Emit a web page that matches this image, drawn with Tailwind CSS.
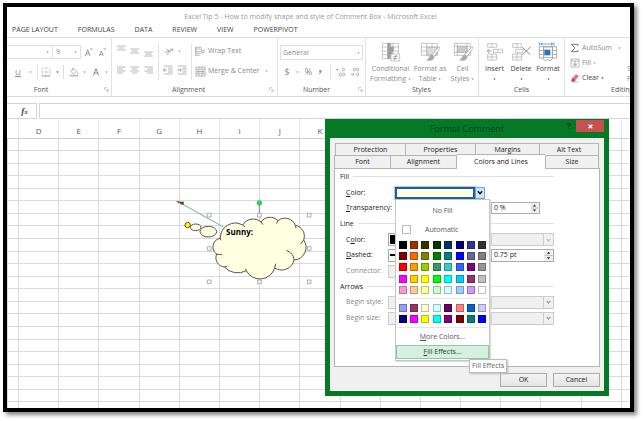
<!DOCTYPE html>
<html lang="en">
<head>
<meta charset="utf-8">
<title>Excel Tip 5</title>
<script src="https://cdn.jsdelivr.net/npm/@tailwindcss/browser@4"></script>
</head>
<body class="bg-white font-['Open_Sans','Noto_Sans',sans-serif] text-[7px] leading-[10px] text-[#444]">
<svg class="hidden">
  <symbol id="caret" viewBox="0 0 10 6"><path d="M1 1h8L5 6z" fill="currentColor"/></symbol>
  <symbol id="launch" viewBox="0 0 16 16"><path d="M2 10V2h8M6 6l7 7M14 7v7H7" fill="none" stroke="#aaa" stroke-width="2"/></symbol>
  <symbol id="chev" viewBox="0 0 14 10"><path d="M2 2l5 6 5-6" fill="none" stroke="currentColor" stroke-width="3"/></symbol>
  <symbol id="spin" viewBox="0 0 24 32"><path d="M7 11l5-6 5 6zM7 21l5 6 5-6z" fill="#222"/><path d="M1 16h22" stroke="#aaa" stroke-width="2"/></symbol>
</svg>
<div class="h-screen p-[3px] pr-[9px] pb-[9px]">
<div class="relative flex h-full flex-col overflow-hidden border-4 border-black bg-white shadow-[3px_3px_4px_#888]">

  <header class="flex h-[15px] shrink-0 items-end justify-center text-[#999]">
    <h1 class="pr-[16px]">Excel Tip 5 - How to modify shape and style of Comment Box - Microsoft Excel</h1>
  </header>
  <nav class="flex h-[16px] shrink-0 items-center gap-[20px] border-b border-[#dcdcdc] pl-[5px]">
    <button>PAGE LAYOUT</button><button>FORMULAS</button><button>DATA</button><button>REVIEW</button><button>VIEW</button><button>POWERPIVOT</button>
  </nav>

  <section class="flex h-[59px] shrink-0 overflow-hidden border-b border-[#dcdcdc] text-[#8a8a8a]">
    <!-- Font -->
    <div class="flex w-[105px] shrink-0 flex-col border-r border-[#e2e2e2]">
      <div class="flex h-[14px] mt-[7px] items-center">
        <button aria-label="Font name" class="flex h-[14px] w-[46px] items-center justify-end border border-l-0 border-[#e0e0e0] pr-[3px]"><svg class="h-[2px] w-[3px]"><use href="#caret"/></svg></button>
        <button aria-label="Font size" class="flex h-[14px] w-[28px] items-center justify-between border border-l-0 border-[#e0e0e0] px-[3px]">9<svg class="h-[2px] w-[3px]"><use href="#caret"/></svg></button>
        <button aria-label="Increase font size" class="ml-[3px] w-[12px]"><svg class="h-[10px] w-[10px]" viewBox="0 0 30 30" fill="none" stroke="#8a8a8a" stroke-width="2.5"><path d="M4 27L11 8l7 19M7 20h9"/><path d="M19 8l3-4 3 4"/></svg></button>
        <button aria-label="Decrease font size" class="ml-[2px] w-[12px]"><svg class="h-[10px] w-[10px]" viewBox="0 0 30 30" fill="none" stroke="#8a8a8a" stroke-width="2.5"><path d="M4 27L10 12l6 15M6 22h8"/><path d="M18 4l3 4 3-4"/></svg></button>
      </div>
      <div class="mt-[6px] flex h-[14px] items-center">
        <button class="w-[22px] text-center text-[8px] underline">U</button>
        <svg class="mr-[5px] h-[2px] w-[3px] shrink-0"><use href="#caret"/></svg>
        <i class="h-[14px] w-px bg-[#ddd]"></i>
        <button aria-label="Borders" class="ml-[3px]"><svg class="h-[10px] w-[10px]" viewBox="0 0 30 30" fill="none" stroke="#aaa" stroke-width="2"><path d="M3 3h24v24H3zM15 3v24M3 15h24" stroke-dasharray="3 2"/><path d="M3 27h24" stroke="#888"/></svg></button>
        <svg class="ml-[5px] mr-[4px] h-[2px] w-[3px] shrink-0 text-[#444]"><use href="#caret"/></svg>
        <i class="h-[14px] w-px bg-[#ddd]"></i>
        <button aria-label="Fill color" class="ml-[5px]"><svg class="h-[10px] w-[10px]" viewBox="0 0 30 30" fill="none" stroke="#999" stroke-width="2"><path d="M5 13L14 4l9 9-9 8zM12 2v9M24 14c4 4 3 6 1 7"/><path d="M2 26h26" stroke-width="5" stroke="#bbb"/></svg></button>
        <svg class="ml-[4px] h-[2px] w-[3px] shrink-0"><use href="#caret"/></svg>
        <button aria-label="Font color" class="ml-[5px]"><svg class="h-[10px] w-[10px]" viewBox="0 0 30 30" fill="none" stroke="#888" stroke-width="3"><path d="M7 25l8-20 8 20M10 18h10"/></svg></button>
        <svg class="ml-[4px] h-[2px] w-[3px] shrink-0"><use href="#caret"/></svg>
      </div>
      <div class="mt-auto flex h-[12px] items-center pb-px"><span class="w-[68px] text-center text-[#555]">Font</span><svg class="ml-auto mr-[2px] h-[5px] w-[5px]"><use href="#launch"/></svg></div>
    </div>
    <!-- Alignment -->
    <div class="flex w-[166px] shrink-0 flex-col border-r border-[#e2e2e2]">
      <div class="flex flex-1 pt-[6px]">
        <div class="flex w-[46px] flex-col gap-[6px] pl-[4px]">
          <svg class="h-[14px] w-[40px]" viewBox="0 0 120 42" stroke="#999" stroke-width="2"><path d="M3 6h26M7 12h18M3 18h26M43 15h26M47 21h18M43 27h26M85 24h26M89 30h18M85 36h26"/></svg>
          <svg class="h-[14px] w-[40px]" viewBox="0 0 120 42" stroke="#999" stroke-width="2"><path d="M3 9h26M3 15h18M3 21h26M3 27h18M43 9h26M48 15h16M43 21h26M48 27h16M85 9h26M93 15h18M85 21h26M93 27h18"/></svg>
        </div>
        <i class="h-[36px] w-px bg-[#e2e2e2]"></i>
        <div class="flex w-[32px] flex-col gap-[6px] pl-[4px]">
          <div class="flex h-[14px] items-center gap-[4px]">
            <svg class="h-[11px] w-[11px]" viewBox="0 0 33 33" fill="none" stroke="#888" stroke-width="2"><path d="M10 28L29 9M22 9h7v7M6 17a4 4 0 1 0 5-5M12 8l7 8M15 16a3 3 0 1 0 4-5"/></svg>
            <svg class="h-[2px] w-[3px]"><use href="#caret"/></svg>
          </div>
          <svg class="h-[12px] w-[26px]" viewBox="0 0 78 36" fill="none" stroke="#999" stroke-width="2"><path d="M3 6h26M15 12h14M15 18h14M15 24h14M3 30h26M45 6h26M58 12h13M58 18h13M58 24h13M45 30h26"/><path d="M12 18H2M6 13l-5 5 5 5M43 18h11M50 13l5 5-5 5" stroke="#777"/></svg>
        </div>
        <i class="h-[36px] w-px bg-[#e2e2e2]"></i>
        <div class="flex flex-1 flex-col gap-[6px] pl-[3px]">
          <button class="flex h-[14px] items-center gap-[3px]"><svg class="h-[11px] w-[10px]" viewBox="0 0 30 33" fill="none" stroke="#999" stroke-width="2"><path d="M2 2v29M2 4h18M2 9h18v8H2zM2 22h16M2 28h12M20 13h7v7h-6M24 17l-3 3 3 3"/></svg>Wrap Text</button>
          <button class="flex h-[14px] items-center gap-[2px] whitespace-nowrap"><svg class="h-[11px] w-[11px] shrink-0" viewBox="0 0 33 33" fill="none" stroke="#999" stroke-width="2"><path d="M3 3h27v27H3zM3 10h27M3 23h27M12 3v7M21 3v7M12 23v7M21 23v7"/><path d="M7 17h19M11 13l-4 4 4 4M22 13l4 4-4 4" stroke="#777"/></svg>Merge &amp; Center<svg class="ml-[4px] h-[2px] w-[3px] shrink-0"><use href="#caret"/></svg></button>
        </div>
      </div>
      <div class="flex h-[12px] items-center pb-px"><span class="ml-[60px] text-[#555]">Alignment</span><svg class="ml-auto mr-[3px] h-[5px] w-[5px]"><use href="#launch"/></svg></div>
    </div>
    <!-- Number -->
    <div class="flex w-[88px] shrink-0 flex-col border-r border-[#e2e2e2]">
      <button class="mx-[2px] mt-[7px] flex h-[15px] items-center justify-between border border-[#ddd] px-[2px]">General<svg class="h-[2px] w-[3px]"><use href="#caret"/></svg></button>
      <div class="mt-[5px] flex h-[14px] items-center text-[9px]">
        <button class="w-[18px] text-center">$</button><svg class="h-[2px] w-[3px]"><use href="#caret"/></svg>
        <button class="w-[19px] text-center">%</button><button aria-label="Comma style" class="w-[8px]"><svg class="h-[6px] w-[5px]" viewBox="0 0 15 18"><path d="M4 3h6v6L6 15H3l3-6H4z" fill="#888"/></svg></button>
        <i class="ml-[4px] h-[14px] w-px bg-[#ddd]"></i>
        <button aria-label="Increase decimal" class="ml-[5px] w-[14px]"><svg class="h-[10px] w-[10px]" viewBox="0 0 30 30" fill="none" stroke="#999" stroke-width="2"><path d="M10 8H1M5 4L1 8l4 4M14 12v1"/><rect x="19" y="3" width="6" height="9" rx="3"/><path d="M5 26v1"/><rect x="10" y="18" width="6" height="9" rx="3"/><rect x="20" y="18" width="6" height="9" rx="3"/></svg></button>
        <button aria-label="Decrease decimal" class="w-[12px]"><svg class="h-[10px] w-[10px]" viewBox="0 0 30 30" fill="none" stroke="#999" stroke-width="2"><rect x="10" y="3" width="6" height="9" rx="3"/><rect x="20" y="3" width="6" height="9" rx="3"/><path d="M5 11v1M2 22h10M8 18l4 4-4 4M15 26v1"/><rect x="20" y="18" width="6" height="9" rx="3"/></svg></button>
      </div>
      <div class="mt-auto flex h-[12px] items-center pb-px"><span class="ml-[25px] text-[#555]">Number</span><svg class="ml-auto mr-[2px] h-[5px] w-[5px]"><use href="#launch"/></svg></div>
    </div>
    <!-- Styles -->
    <div class="flex w-[113px] shrink-0 flex-col border-r border-[#e2e2e2]">
      <div class="flex flex-1 pt-[4px] leading-[10px]">
        <button class="flex w-[47px] flex-col items-center whitespace-nowrap pl-[2px]"><svg class="mb-[2px] h-[20px] w-[20px]" viewBox="0 0 60 60" fill="none" stroke="#aaa" stroke-width="2"><path d="M4 4h48v46H4zM4 15h48M4 27h48M4 38h48M20 4v46M36 4v46"/><path d="M20 4h9v11h-9zM20 27h14v11H20zM20 15h18v12H20zM20 38h8v12h-8z" fill="#999"/><path d="M30 36h26v21H30z" fill="#fff"/><path d="M36 43h13M36 50h13M46 39l-7 15" stroke="#888"/></svg>Conditional<span class="flex items-center gap-[2px]">Formatting<svg class="h-[2px] w-[3px]"><use href="#caret"/></svg></span></button>
        <button class="flex w-[34px] flex-col items-center whitespace-nowrap"><svg class="mb-[2px] h-[20px] w-[20px]" viewBox="0 0 60 60" fill="none" stroke="#aaa" stroke-width="2"><path d="M4 4h48v36H4zM4 15h48M4 27h48M20 4v36M36 4v36"/><path d="M20 16h31v23H20z" fill="#ddd"/><path d="M57 14L36 38l6 6 18-25z" fill="#fff" stroke="#999"/><path d="M36 38c-9 2-7 12-16 16 10 3 22 1 22-10z" fill="#aaa"/></svg>Format as<span class="flex items-center gap-[2px]">Table<svg class="h-[2px] w-[3px]"><use href="#caret"/></svg></span></button>
        <button class="flex w-[31px] flex-col items-center whitespace-nowrap"><svg class="mb-[2px] h-[20px] w-[20px]" viewBox="0 0 60 60" fill="none" stroke="#aaa" stroke-width="2"><path d="M4 4h48v36H4zM4 13h48M4 31h48M13 4v36M42 4v36"/><path d="M13 13h29v18H13z" fill="#ccc"/><path d="M57 14L36 38l6 6 18-25z" fill="#fff" stroke="#999"/><path d="M36 38c-9 2-7 12-16 16 10 3 22 1 22-10z" fill="#aaa"/></svg>Cell<span class="flex items-center gap-[2px]">Styles<svg class="h-[2px] w-[3px]"><use href="#caret"/></svg></span></button>
      </div>
      <div class="flex h-[12px] items-center pb-px"><span class="ml-[46px] text-[#555]">Styles</span></div>
    </div>
    <!-- Cells -->
    <div class="flex w-[86px] shrink-0 flex-col border-r border-[#e2e2e2] text-[#444]">
      <div class="flex flex-1 pt-[4px] pl-[3px]">
        <button class="flex w-[25px] flex-col items-center"><svg class="mb-[2px] h-[20px] w-[18px]" viewBox="0 0 54 60" fill="none" stroke="#aaa" stroke-width="2"><path d="M5 5h27v11H5zM18 5v11M22 22h28v10H22zM36 22v10M5 36h27v18H5zM18 36v18M5 45h27"/><path d="M17 27H4M10 21l-6 6 6 6" stroke="#777"/></svg>Insert<svg class="mt-[4px] h-[2px] w-[3px]"><use href="#caret"/></svg></button>
        <button class="flex w-[28px] flex-col items-center"><svg class="mb-[2px] h-[20px] w-[20px]" viewBox="0 0 60 60" fill="none" stroke="#aaa" stroke-width="2"><path d="M5 5h27v11H5zM18 5v11M14 22h22v10H14zM5 36h27v18H5zM18 36v18M5 45h27"/><path d="M34 16l24 22M58 15L34 39" stroke="#888" stroke-width="3"/></svg>Delete<svg class="mt-[4px] h-[2px] w-[3px]"><use href="#caret"/></svg></button>
        <button class="flex w-[26px] flex-col items-center"><svg class="mb-[2px] h-[20px] w-[20px]" viewBox="0 0 60 60" fill="none" stroke="#888" stroke-width="2"><path d="M4 14h52v34H4zM4 25h52M4 37h52M17 14v34M43 14v34"/><path d="M17 15h26v32H17z" fill="#fff"/><path d="M19 23h18v17H19z" fill="#2f72b8" stroke="none"/><path d="M8 6h36M13 2L8 6l5 4M39 2l5 4-5 4M4 1v10M48 1v10" stroke="#2f72b8"/><path d="M14 48c4 9 10 9 14 3 4 6 12 6 16-3" fill="#fff"/></svg>Format<svg class="mt-[4px] h-[2px] w-[3px]"><use href="#caret"/></svg></button>
      </div>
      <div class="flex h-[12px] items-center justify-center pb-px text-[#555]">Cells</div>
    </div>
    <!-- Editing -->
    <div class="flex w-[96px] shrink-0 flex-col">
      <div class="flex flex-1">
        <div class="flex w-[62px] flex-col gap-[4px] pt-[4px] pl-[5px]">
          <button class="flex h-[11px] items-center gap-[2px]"><svg class="h-[10px] w-[10px]" viewBox="0 0 30 30" fill="none" stroke="#777" stroke-width="3"><path d="M24 9V4H4l11 11L4 26h20v-5"/></svg>AutoSum<svg class="ml-[4px] h-[2px] w-[3px]"><use href="#caret"/></svg></button>
          <button class="flex h-[11px] items-center gap-[2px]"><svg class="h-[10px] w-[10px]" viewBox="0 0 30 30" fill="none" stroke="#999" stroke-width="2"><path d="M3 3h24v24H3zM3 9h24"/><path d="M15 10v13M9 17l6 6 6-6" stroke-width="3"/></svg>Fill<svg class="h-[2px] w-[3px]"><use href="#caret"/></svg></button>
          <button class="flex h-[11px] items-center gap-[2px] text-[#444]"><svg class="h-[10px] w-[10px]" viewBox="0 0 30 30"><path d="M8 14L18 3l9 6-10 12z" fill="#e27a8c"/><path d="M8 14l9 7-4 5H7l-4-4z" fill="#c8405a"/><path d="M5 27h20" stroke="#999" stroke-width="2"/></svg>Clear<svg class="h-[2px] w-[3px]"><use href="#caret"/></svg></button>
        </div>
        <div class="pt-[26px]">Sort &amp;<br>Filter</div>
      </div>
      <div class="flex h-[12px] items-center pb-px pl-[46px] text-[#555]">Editing</div>
    </div>
  </section>

  <div class="mt-[6px] flex h-[16px] shrink-0 gap-[2px]">
    <button aria-label="Insert function" class="w-[30px] border border-l-0 border-[#d4d4d4] pl-[6px] font-['Liberation_Serif',serif] text-[9px] font-bold italic">f<span class="text-[7px]">x</span></button>
    <input aria-label="Formula bar" class="min-w-0 flex-1 border border-r-0 border-[#d4d4d4]">
  </div>

  <div class="min-h-0 flex-1 overflow-hidden">
    <table class="h-[296px] w-[655px] table-fixed border-collapse text-[8px]">
      <thead><tr id="cols" class="h-[19px]"><th class="w-[11px] border-r border-b border-r-[#e6e6e6] border-b-[#cfcfcf]"></th></tr></thead>
      <tbody id="rows"></tbody>
    </table>
  </div>

  <!-- Comment shape -->
  <figure class="absolute top-[178px] left-[153px] h-[110px] w-[170px]">
    <svg class="h-full w-full" viewBox="0 0 510 330" fill="none" stroke="#55554a" stroke-width="3">
      <path d="M62 54L190 126" stroke="#7ba9a0"/>
      <path d="M48 49h12l-3 7z" fill="#d22" stroke="none"/><path d="M58 50h14l-2 10-8-2z" fill="#265c33" stroke="none"/>
      <path d="M298 58v28" stroke="#888"/>
      <circle cx="298" cy="54" r="8" fill="#35cf52" stroke="none"/>
      <ellipse cx="107" cy="127" rx="16" ry="10" fill="#ffffe1"/>
      <ellipse cx="145" cy="140" rx="25" ry="16" fill="#ffffe1"/>
      <circle cx="83" cy="120" r="8" fill="#ff0" stroke="#554"/>
      <path d="M181 160A45 45 0 0 1 248 120A36 36 0 0 1 303 111A33 33 0 0 1 354 107A33 33 0 0 1 406 121A33 33 0 0 1 431 165A38 38 0 0 1 402 225A38 38 0 0 1 344 249A46 46 0 0 1 259 257A54 54 0 0 1 193 246A28 28 0 0 1 170 207A26 26 0 0 1 181 160Z" fill="#ffffe1"/>
      <path d="M248 120l7 6M303 111l6 8M354 107l-5 9M406 121l2 8M431 165l-9 12M402 225c0-13-9-23-23-29M344 249l3-13M259 257l-2-6M193 246l8-2M170 207q8 3 16 1M181 160l2 6"/>
      <g fill="#fff" stroke="#888" stroke-width="2"><path d="M142 85h11v11h-11zM293 85h11v11h-11zM442 85h11v11h-11zM142 185h11v11h-11zM442 185h11v11h-11zM142 285h11v11h-11zM293 285h11v11h-11zM442 285h11v11h-11z"/></g>
    </svg>
    <figcaption class="absolute top-[42px] left-[66px] text-[8px] font-bold text-black">Sunny:</figcaption>
  </figure>

  <!-- Format Comment dialog -->
  <div role="dialog" aria-labelledby="dlg" class="absolute top-[112px] left-[318px] flex h-[277px] w-[284px] flex-col border-[5px] border-t-0 border-[#047a26] bg-[#f0f0f0] text-[#222]">
    <div class="relative flex h-[19px] shrink-0 items-center justify-center bg-[#047a26] text-[9px] text-[#0b4018]">
      <h2 id="dlg">Format Comment</h2>
      <button class="absolute top-[2px] right-[33px] font-bold">?</button>
      <button aria-label="Close" class="absolute top-[1px] right-0 flex h-[12px] w-[28px] items-center justify-center bg-[#c75050]"><svg class="h-[5px] w-[5px]" viewBox="0 0 15 15"><path d="M2 2l11 11M13 2L2 13" stroke="#fff" stroke-width="4"/></svg></button>
    </div>
    <div role="tablist" class="mt-[5px] ml-[5px] mr-[5px] flex h-[12px] shrink-0 border-l border-t border-[#b4b4b4]">
      <button role="tab" class="w-[70px] border-r border-[#b4b4b4]">Protection</button><button role="tab" class="w-[70px] border-r border-[#b4b4b4]">Properties</button><button role="tab" class="w-[64px] border-r border-[#b4b4b4]">Margins</button><button role="tab" class="flex-1 border-r border-[#b4b4b4]">Alt Text</button>
    </div>
    <div role="tablist" class="z-10 mr-[5px] ml-[4px] flex h-[13px] shrink-0 border-l border-[#b4b4b4]">
      <button role="tab" class="w-[56px] border-t border-r border-[#b4b4b4]">Font</button><button role="tab" class="w-[66px] border-t border-r border-[#b4b4b4]">Alignment</button><button role="tab" aria-selected="true" class="-mt-px -mb-px w-[88px] border-t border-[#b4b4b4] bg-white">Colors and Lines</button><button role="tab" class="flex-1 border-x border-t border-[#b4b4b4]">Size</button>
    </div>
    <div class="mx-[4px] grid h-[199px] shrink-0 auto-rows-fr grid-cols-[48px_103px_1fr] items-center border border-[#b4b4b4] bg-white pr-[45px] pb-[40px] pl-[5px]">
      <div class="col-span-3 flex items-center gap-[4px]">Fill<hr class="flex-1 border-[#e0e0e0]"></div>

      <label for="fc" class="pl-[6px]"><u>C</u>olor:</label>
      <div class="col-span-2 flex pl-[7px]">
        <button id="fc" aria-label="Fill color" class="h-[12px] w-[80px] border-2 border-[#1f5f8f] bg-[#ffffe1] outline outline-[#a9cdf0]"></button><button aria-label="Open palette" class="flex h-[12px] w-[10px] items-center justify-center border border-[#6fa8dc] bg-[#cfe4fa] text-black"><svg class="h-[5px] w-[6px]"><use href="#chev"/></svg></button>
      </div>

      <label for="tr" class="pl-[6px]"><u>T</u>ransparency:</label><span></span>
      <div class="flex h-[12px] w-[49px] border border-[#ababab]"><input id="tr" value="0 %" class="w-0 min-w-0 flex-1 pl-[2px]"><svg class="h-[10px] w-[9px] bg-[#eee]"><use href="#spin"/></svg></div>

      <div class="col-span-3 flex items-center gap-[4px]">Line<hr class="flex-1 border-[#e0e0e0]"></div>

      <label for="lc" class="pl-[6px]">C<u>o</u>lor:</label>
      <button id="lc" class="h-[13px] w-[64px] border border-[#ababab] p-px"><span class="block h-full w-full bg-black"></span></button>
      <button aria-label="Line style" class="flex h-[13px] items-center justify-end border border-[#ccc] bg-[#f0f0f0] text-[#bbb]"><span class="flex h-full w-[10px] items-center justify-center border-l border-[#ccc]"><svg class="h-[4px] w-[5px]"><use href="#chev"/></svg></span></button>

      <label for="da" class="pl-[6px]"><u>D</u>ashed:</label>
      <button id="da" class="flex h-[13px] w-[64px] items-center border border-[#ababab] p-px"><span class="block h-[2px] w-full bg-black"></span></button>
      <div class="flex h-[13px] border border-[#ababab]"><input aria-label="Weight" value="0.75 pt" class="w-0 min-w-0 flex-1 pl-[2px]"><svg class="h-[11px] w-[9px] bg-[#eee]"><use href="#spin"/></svg></div>

      <label for="cn" class="pl-[6px] text-[#888]">Connector:</label>
      <button id="cn" disabled class="h-[13px] w-[64px] border border-[#ccc] bg-[#f0f0f0]"></button><span></span>

      <div class="col-span-3 flex items-center gap-[4px]">Arrows<hr class="flex-1 border-[#e0e0e0]"></div>

      <label for="bs" class="whitespace-nowrap pl-[6px] text-[#888]">Begin style:</label>
      <button id="bs" disabled class="h-[13px] w-[64px] border border-[#ccc] bg-[#f0f0f0]"></button>
      <button aria-label="End style" disabled class="flex h-[13px] items-center justify-end border border-[#ccc] bg-[#f0f0f0] text-[#999]"><span class="flex h-full w-[10px] items-center justify-center border-l border-[#ccc]"><svg class="h-[4px] w-[5px]"><use href="#chev"/></svg></span></button>

      <label for="bz" class="whitespace-nowrap pl-[6px] text-[#888]">Begin size:</label>
      <button id="bz" disabled class="h-[13px] w-[64px] border border-[#ccc] bg-[#f0f0f0]"></button>
      <button aria-label="End size" disabled class="flex h-[13px] items-center justify-end border border-[#ccc] bg-[#f0f0f0] text-[#999]"><span class="flex h-full w-[10px] items-center justify-center border-l border-[#ccc]"><svg class="h-[4px] w-[5px]"><use href="#chev"/></svg></span></button>
    </div>
    <div class="mt-[6px] mr-[4px] flex justify-end gap-[6px]">
      <button class="h-[14px] w-[47px] border border-[#acacac] bg-gradient-to-b from-[#f4f4f4] to-[#e4e4e4]">OK</button>
      <button class="h-[14px] w-[47px] border border-[#acacac] bg-gradient-to-b from-[#f4f4f4] to-[#e4e4e4]">Cancel</button>
    </div>

    <div class="absolute top-[80px] left-[65px] z-20 flex w-[95px] flex-col border border-[#c6c6c6] bg-white text-[#555] shadow-[1px_1px_1px_#ddd]">
      <button class="h-[22px]">No Fill</button>
      <button class="flex h-[15px] items-center gap-[14px] pl-[6px]"><span class="h-[9px] w-[9px] border border-[#bbb]"></span>Automatic</button>
      <div id="std" class="grid h-[59px] grid-cols-8 items-center justify-items-center px-px pt-[2px]"></div>
      <hr class="mx-[2px] mt-[2px] mb-[3px] border-[#e4e4e4]">
      <div id="recent" class="grid h-[23px] grid-cols-8 items-center justify-items-center px-px"></div>
      <hr class="mx-[2px] mt-[2px] border-[#e4e4e4]">
      <button class="h-[17px] pt-px"><u>M</u>ore Colors...</button>
      <button class="h-[14px] border border-[#8cc9a8] bg-[#d3f0e0] text-[#333]"><u>F</u>ill Effects...</button>
      <div class="h-px"></div>
    </div>
    <div role="tooltip" class="absolute top-[240px] left-[139px] z-30 h-[14px] border border-[#bbb] bg-white px-[2px] leading-[12px] whitespace-nowrap text-[#666] shadow-[1px_1px_2px_#bbb]">Fill Effects</div>
  </div>
</div>
</div>
<script>
  const cols = document.getElementById('cols'), rows = document.getElementById('rows');
  for (const c of 'DEFGHIJKLMNOPQRS') {
    const th = document.createElement('th');
    th.className = 'border-x border-b border-x-[#e6e6e6] border-b-[#cfcfcf] pt-[5px] font-normal leading-[10px] text-[#555]';
    th.textContent = 'DEFGHIJK'.includes(c) ? c : '';
    cols.append(th);
  }
  for (let r = 0; r < 22; r++) {
    const tr = rows.insertRow();
    for (let i = 0; i < 17; i++) tr.insertCell().className = 'border border-[#dadada] p-0';
  }
  const fill = (id, list) => {
    for (const c of list.split(' ')) {
      const b = document.createElement('button');
      b.className = 'h-[8px] w-[8px] border border-black/25';
      b.style.backgroundColor = b.title = '#' + c;
      document.getElementById(id).append(b);
    }
  };
  fill('std', '000000 993300 333300 003300 003366 000080 333399 333333 800000 ff6600 808000 008000 008080 0000ff 666699 808080 ff0000 ff9900 99cc00 339966 33cccc 3366ff 800080 969696 ff00ff ffcc00 ffff00 00ff00 00ffff 00ccff 993366 c0c0c0 ff99cc ffcc99 ffff99 ccffcc ccffff 99ccff cc99ff ffffff');
  fill('recent', '9999ff 993366 ffffcc ccffff 660066 ff8080 0066cc ccccff 000080 ff00ff ffff00 00ffff 800080 800000 008080 0000ff');
</script>
</body>
</html>
